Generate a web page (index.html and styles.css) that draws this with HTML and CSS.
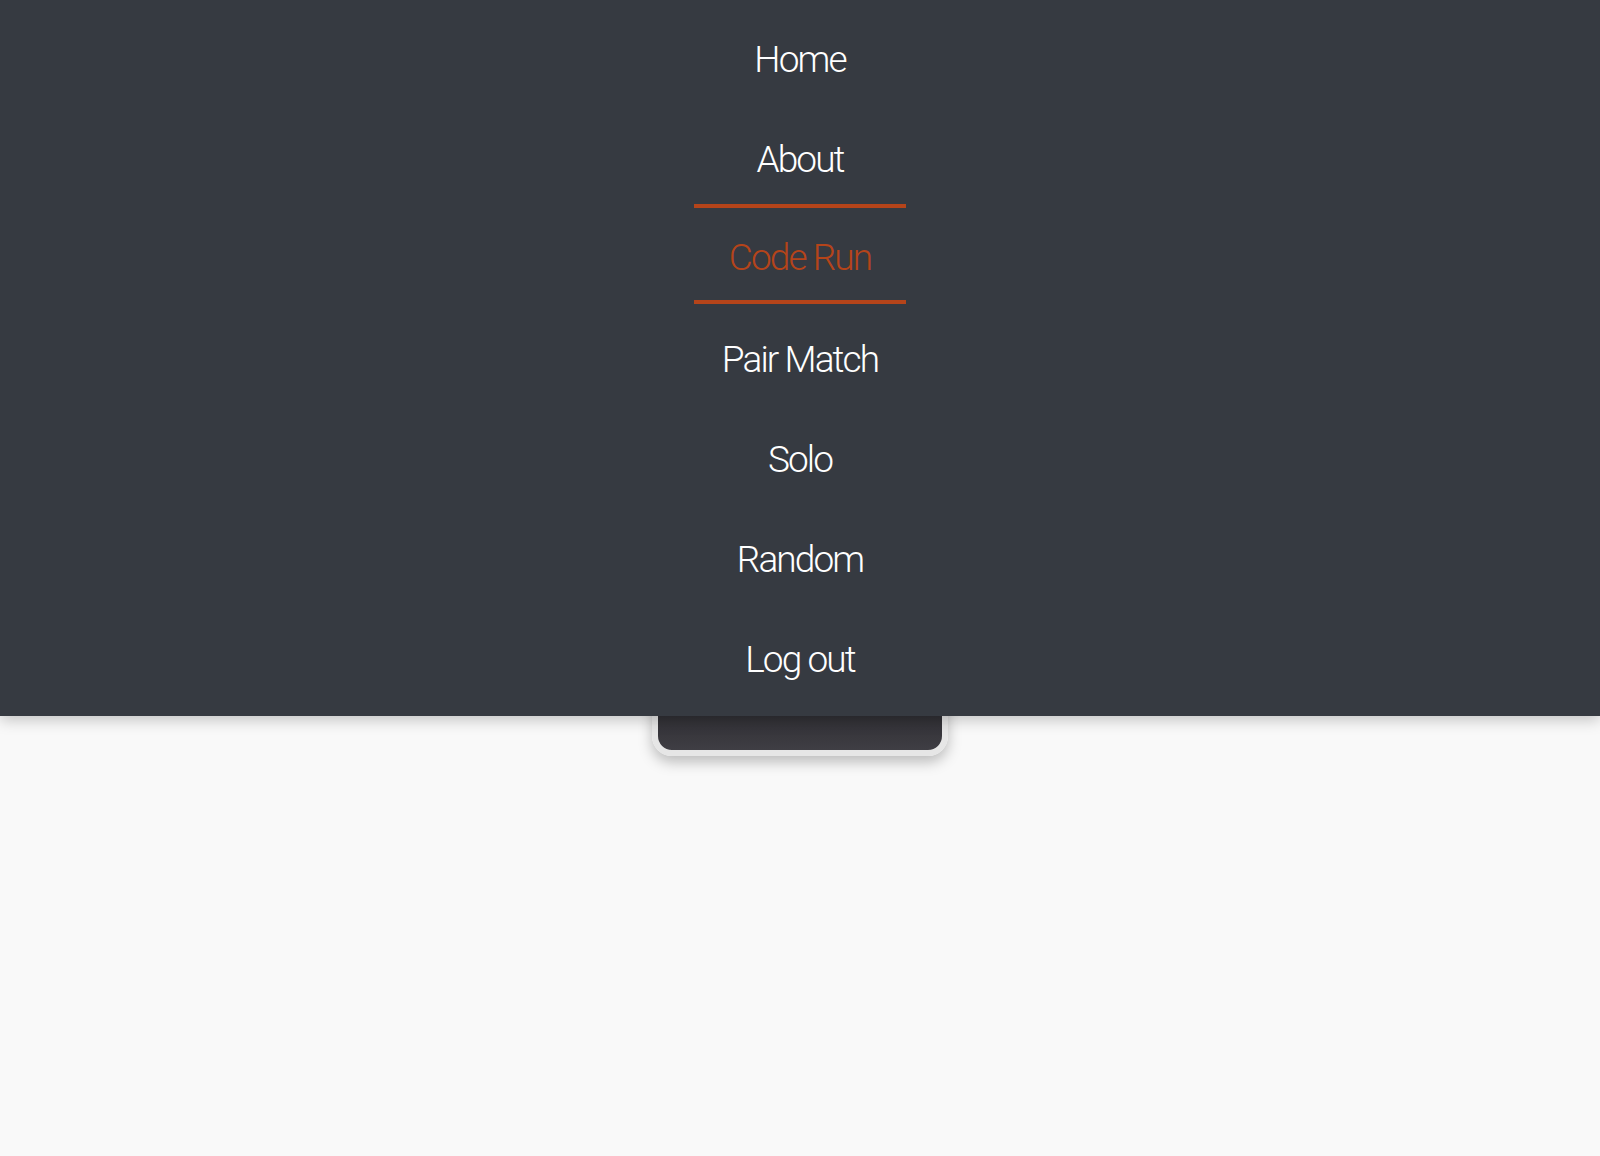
FILE: index.html
```html
<!DOCTYPE html>
<html>
<head>
<meta charset="utf-8">
<link rel="stylesheet" href="styles.css">
</head>
<body>
<main class="page">
  <div class="card"></div>
</main>
<nav class="menu">
  <ul class="menu-list">
    <li class="menu-item"><a href="#">Home</a></li>
    <li class="menu-item"><a href="#">About</a></li>
    <li class="menu-item active"><a href="#">Code Run</a></li>
    <li class="menu-item"><a href="#">Pair Match</a></li>
    <li class="menu-item"><a href="#">Solo</a></li>
    <li class="menu-item"><a href="#">Random</a></li>
    <li class="menu-item"><a href="#">Log out</a></li>
  </ul>
</nav>
</body>
</html>
```
FILE: styles.css
```css
html, body {
  margin: 0;
  padding: 0;
  background: #f9f9f9;
  font-family: Roboto, "Liberation Sans", sans-serif;
}
.page {
  display: flex;
  justify-content: center;
  padding-top: 556px;
  min-height: 1156px;
  box-sizing: border-box;
}
.card {
  width: 296px;
  height: 200px;
  box-sizing: border-box;
  border: 6px solid #e6e6e6;
  border-radius: 0 0 20px 20px;
  background: linear-gradient(to bottom, #2c2b30 0%, #2f2e33 80%, #3f3e44 100%);
  box-shadow: 0 6px 14px rgba(0, 0, 0, 0.25);
}
.menu {
  position: absolute;
  top: 0;
  left: 0;
  right: 0;
  height: 716px;
  background: #363a41;
  box-shadow: 0 4px 14px rgba(0, 0, 0, 0.22);
  z-index: 10;
}
.menu-list {
  list-style: none;
  margin: 0;
  padding: 4px 0 0;
  display: flex;
  flex-direction: column;
  align-items: center;
}
.menu-item {
  width: 212px;
  height: 100px;
  box-sizing: border-box;
  display: flex;
  align-items: center;
  justify-content: center;
  padding-top: 11px;
}
.menu-item a {
  color: #ffffff;
  text-decoration: none;
  font-size: 37px;
  font-weight: 300;
  letter-spacing: -1.9px;
  line-height: 1;
}
.menu-item.active {
  border-top: 4px solid #b5441a;
  border-bottom: 4px solid #b5441a;
  padding-top: 7px;
}
.menu-item.active a {
  color: #b5441a;
}
```
